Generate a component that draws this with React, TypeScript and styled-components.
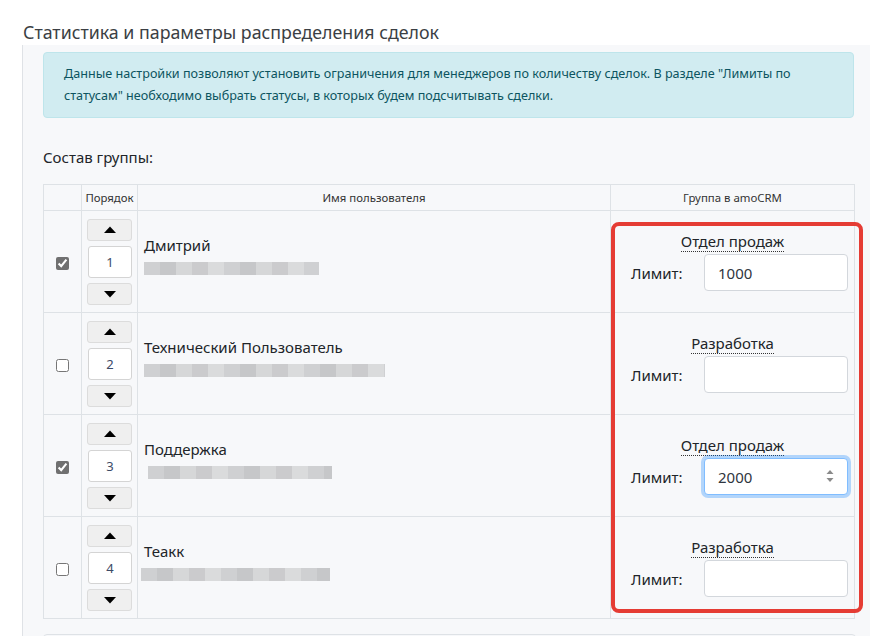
import React from 'react';
import styled, { createGlobalStyle } from 'styled-components';

const GlobalStyle = createGlobalStyle`
  html, body {
    margin: 0;
    padding: 0;
    background: #ffffff;
  }
  body {
    font-family: "Noto Sans", "Open Sans", Arial, sans-serif;
    color: #212529;
  }
`;

const Page = styled.div`
  width: 870px;
  height: 636px;
  overflow: hidden;
`;

const Title = styled.h4`
  margin: 20px 0 0 23px;
  font-size: 17.8px;
  line-height: 25px;
  font-weight: 400;
  color: #3b3f44;
`;

const Panel = styled.div`
  margin-left: 22px;
  border-left: 1px solid #dfe2e6;
  background: #f7f8fa;
  padding: 7px 16px 0 20px;
  height: 620px;
`;

const Alert = styled.div`
  background: #d1ecf1;
  border: 1px solid #bee5eb;
  border-radius: 4px;
  color: #0c5460;
  font-size: 12.6px;
  line-height: 22px;
  padding: 10px 20px 10px 20px;
`;

const SectionLabel = styled.div`
  margin: 28px 0 16px;
  font-size: 15px;
  line-height: 22px;
  color: #212529;
`;

const TableWrap = styled.div`
  position: relative;
`;

const Table = styled.table`
  width: 811px;
  border-collapse: collapse;
  table-layout: fixed;
`;

const HeadCell = styled.th<{ $w: number }>`
  width: ${(p) => p.$w}px;
  height: 25px;
  border: 1px solid #dee2e6;
  font-size: 11.4px;
  font-weight: 400;
  color: #333;
  padding: 0;
  text-align: center;
  vertical-align: middle;
`;

const Cell = styled.td<{ $align?: string }>`
  height: 101px;
  border: 1px solid #dee2e6;
  padding: 0;
  vertical-align: middle;
  text-align: ${(p) => p.$align || 'left'};
`;

const Check = styled.input`
  width: 13px;
  height: 13px;
  margin: 0;
  accent-color: #707070;
  vertical-align: middle;
`;

const OrderBox = styled.div`
  display: flex;
  flex-direction: column;
  align-items: center;
  gap: 5px;
`;

const ArrowBtn = styled.button`
  width: 45px;
  height: 22px;
  padding: 0;
  background: #efefef;
  border: 1px solid #dcdcdc;
  border-radius: 3px;
  display: flex;
  align-items: center;
  justify-content: center;
`;

const OrderInput = styled.div`
  width: 42px;
  height: 30px;
  background: #fff;
  border: 1px solid #d4d4d4;
  border-radius: 3px;
  display: flex;
  align-items: center;
  justify-content: center;
  font-size: 13px;
  color: #3c4a66;
  margin-left: 1px;
`;

const NameBox = styled.div`
  display: flex;
  flex-direction: column;
  padding: 0 0 14px 6px;
`;

const UserName = styled.div`
  font-size: 15px;
  line-height: 22px;
  color: #212529;
`;

const Blur = styled.div<{ $w: number; $dx: number }>`
  margin-top: 6px;
  margin-left: ${(p) => p.$dx}px;
  width: ${(p) => p.$w}px;
  height: 13px;
  background: repeating-linear-gradient(
    90deg,
    #cfd0d2 0 16px,
    #c6c7c9 16px 32px,
    #d6d7d8 32px 48px,
    #cbcbcd 48px 64px,
    #dadbdc 64px 80px
  );
`;

const GroupBox = styled.div`
  display: flex;
  flex-direction: column;
  align-items: center;
  gap: 2px;
`;

const GroupName = styled.span`
  font-size: 15px;
  line-height: 19px;
  color: #212529;
  border-bottom: 1px dotted #333;
`;

const LimitRow = styled.div`
  display: flex;
  align-items: center;
  width: 100%;
  box-sizing: border-box;
  padding: 0 6px 0 20px;
`;

const LimitLabel = styled.span`
  width: 74px;
  font-size: 15px;
  color: #212529;
`;

const LimitField = styled.div`
  position: relative;
`;

const LimitInput = styled.div<{ $focus?: boolean }>`
  width: 144px;
  height: 37px;
  box-sizing: border-box;
  background: #fff;
  border: 1px solid ${(p) => (p.$focus ? '#80bdff' : '#d3d7dc')};
  box-shadow: ${(p) => (p.$focus ? '0 0 0 3px rgba(0, 123, 255, 0.28)' : 'none')};
  border-radius: 4px;
  padding: 0 13px;
  display: flex;
  align-items: center;
  font-size: 15px;
  color: #2f3640;
`;

const Spinner = styled.svg`
  position: absolute;
  right: 14px;
  top: 11px;
`;

const Highlight = styled.div`
  position: absolute;
  left: 568px;
  top: 38px;
  width: 252px;
  height: 391px;
  box-sizing: border-box;
  border: 4px solid #e53c34;
  border-radius: 8px;
  pointer-events: none;
`;

const NextBlock = styled.div`
  margin-top: 15px;
  width: 811px;
  height: 60px;
  border: 1px solid #dee2e6;
  border-radius: 4px;
`;

const Triangle = ({ down }: { down?: boolean }) => (
  <svg width="14" height="8" viewBox="0 0 14 8">
    <path d={down ? 'M1 1 H13 L7 7.5 Z' : 'M1 7 H13 L7 0.5 Z'} fill="#000" />
  </svg>
);

type User = {
  name: string;
  order: number;
  checked: boolean;
  group: string;
  limit: string;
  focus?: boolean;
  blurW: number;
  blurDx: number;
};

const users: User[] = [
  { name: 'Дмитрий', order: 1, checked: true, group: 'Отдел продаж', limit: '1000', blurW: 175, blurDx: 0 },
  { name: 'Технический Пользователь', order: 2, checked: false, group: 'Разработка', limit: '', blurW: 241, blurDx: 0 },
  { name: 'Поддержка', order: 3, checked: true, group: 'Отдел продаж', limit: '2000', focus: true, blurW: 184, blurDx: 4 },
  { name: 'Теакк', order: 4, checked: false, group: 'Разработка', limit: '', blurW: 189, blurDx: -3 },
];

export default function App(): JSX.Element {
  return (
    <Page>
      <GlobalStyle />
      <Title>Статистика и параметры распределения сделок</Title>
      <Panel>
        <Alert>
          Данные настройки позволяют установить ограничения для менеджеров по количеству сделок. В разделе "Лимиты по
          статусам" необходимо выбрать статусы, в которых будем подсчитывать сделки.
        </Alert>
        <SectionLabel>Состав группы:</SectionLabel>
        <TableWrap>
          <Table>
            <thead>
              <tr>
                <HeadCell $w={37} />
                <HeadCell $w={55}>Порядок</HeadCell>
                <HeadCell $w={472}>Имя пользователя</HeadCell>
                <HeadCell $w={243}>Группа в amoCRM</HeadCell>
              </tr>
            </thead>
            <tbody>
              {users.map((u) => (
                <tr key={u.order}>
                  <Cell $align="center">
                    <Check type="checkbox" defaultChecked={u.checked} />
                  </Cell>
                  <Cell>
                    <OrderBox>
                      <ArrowBtn>
                        <Triangle />
                      </ArrowBtn>
                      <OrderInput>{u.order}</OrderInput>
                      <ArrowBtn>
                        <Triangle down />
                      </ArrowBtn>
                    </OrderBox>
                  </Cell>
                  <Cell>
                    <NameBox>
                      <UserName>{u.name}</UserName>
                      <Blur $w={u.blurW} $dx={u.blurDx} />
                    </NameBox>
                  </Cell>
                  <Cell>
                    <GroupBox>
                      <GroupName>{u.group}</GroupName>
                      <LimitRow>
                        <LimitLabel>Лимит:</LimitLabel>
                        <LimitField>
                          <LimitInput $focus={u.focus}>{u.limit}</LimitInput>
                          {u.focus && (
                            <Spinner width="8" height="14" viewBox="0 0 8 14">
                              <path d="M4 1 L7.5 5 H0.5 Z M4 13 L7.5 9 H0.5 Z" fill="#8a8a8a" />
                            </Spinner>
                          )}
                        </LimitField>
                      </LimitRow>
                    </GroupBox>
                  </Cell>
                </tr>
              ))}
            </tbody>
          </Table>
          <Highlight />
        </TableWrap>
        <NextBlock />
      </Panel>
    </Page>
  );
}
